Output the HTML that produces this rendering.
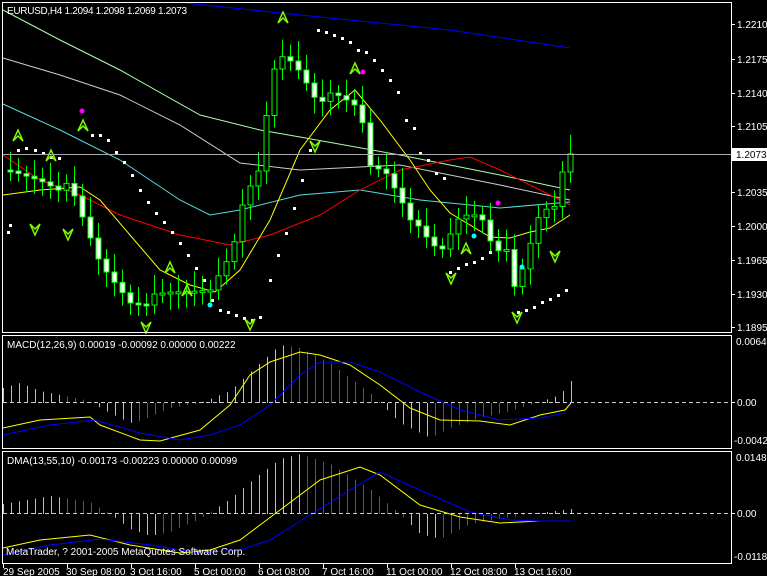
<!DOCTYPE html>
<html><head><meta charset="utf-8"><style>
html,body{margin:0;padding:0;background:#000;width:767px;height:576px;overflow:hidden}
svg{display:block}
text{font-family:"Liberation Sans",sans-serif;font-size:10px;fill:#fff}
</style></head><body>
<svg id="s" width="767" height="576" xmlns="http://www.w3.org/2000/svg">
<rect width="767" height="576" fill="#000"/>
<g id="g"></g>
<g fill="none" stroke="#fff" stroke-width="1">
<rect x="2.5" y="2.5" width="729" height="330"/>
<rect x="2.5" y="335.5" width="729" height="113"/>
<rect x="2.5" y="451.5" width="729" height="112"/>
</g>
<line x1="3" y1="154.5" x2="731" y2="154.5" stroke="#aaa"/>
<line x1="3" y1="402.5" x2="731" y2="402.5" stroke="#ccc" stroke-dasharray="4,3"/>
<line x1="3" y1="513.5" x2="731" y2="513.5" stroke="#ccc" stroke-dasharray="4,3"/>
<g stroke="#fff"><line x1="731" y1="24.5" x2="735" y2="24.5"/><line x1="731" y1="59.5" x2="735" y2="59.5"/><line x1="731" y1="93.5" x2="735" y2="93.5"/><line x1="731" y1="126.5" x2="735" y2="126.5"/><line x1="731" y1="192.5" x2="735" y2="192.5"/><line x1="731" y1="226.5" x2="735" y2="226.5"/><line x1="731" y1="260.5" x2="735" y2="260.5"/><line x1="731" y1="294.5" x2="735" y2="294.5"/><line x1="731" y1="327.5" x2="735" y2="327.5"/><line x1="731" y1="402.5" x2="735" y2="402.5"/><line x1="731" y1="513.5" x2="735" y2="513.5"/></g>
<text x="737" y="28">1.2210</text><text x="737" y="63">1.2175</text><text x="737" y="97">1.2140</text><text x="737" y="130">1.2105</text>
<text x="737" y="196">1.2035</text><text x="737" y="230">1.2000</text><text x="737" y="264">1.1965</text><text x="737" y="298">1.1930</text><text x="737" y="331">1.1895</text>
<rect x="732" y="148" width="35" height="13" fill="#fff"/><text x="736" y="158" style="fill:#000">1.2073</text>
<text x="736" y="345">0.00648</text><text x="737" y="406">0.00</text><text x="734" y="444">-0.00425</text>
<text x="736" y="461">0.01486</text><text x="737" y="517">0.00</text><text x="734" y="560">-0.01182</text>
<text x="7" y="14" textLength="180">EURUSD,H4  1.2094 1.2098 1.2069 1.2073</text>
<text x="7" y="348">MACD(12,26,9) 0.00019 -0.00092 0.00000 0.00222</text>
<text x="7" y="464">DMA(13,55,10) -0.00173 -0.00223 0.00000 0.00099</text>
<text x="6" y="555">MetaTrader, ? 2001-2005 MetaQuotes Software Corp.</text>
<g stroke="#fff"><line x1="3.5" y1="564" x2="3.5" y2="568"/><line x1="67.5" y1="564" x2="67.5" y2="568"/><line x1="131.5" y1="564" x2="131.5" y2="568"/><line x1="195.5" y1="564" x2="195.5" y2="568"/><line x1="259.5" y1="564" x2="259.5" y2="568"/><line x1="323.5" y1="564" x2="323.5" y2="568"/><line x1="387.5" y1="564" x2="387.5" y2="568"/><line x1="451.5" y1="564" x2="451.5" y2="568"/><line x1="515.5" y1="564" x2="515.5" y2="568"/></g>
<text x="3" y="575">29 Sep 2005</text><text x="66" y="575">30 Sep 08:00</text><text x="130" y="575">3 Oct 16:00</text><text x="194" y="575">5 Oct 00:00</text><text x="258" y="575">6 Oct 08:00</text><text x="322" y="575">7 Oct 16:00</text><text x="386" y="575">11 Oct 00:00</text><text x="450" y="575">12 Oct 08:00</text><text x="514" y="575">13 Oct 16:00</text>
</svg>
<script>
var g=document.getElementById('g'),NS='http://www.w3.org/2000/svg';
function el(t,a){var e=document.createElementNS(NS,t);for(var k in a)e.setAttribute(k,a[k]);g.appendChild(e);return e;}
function interp(pts,x){for(var i=0;i<pts.length-1;i++){if(x<=pts[i+1][0]){var a=pts[i],b=pts[i+1];return a[1]+(b[1]-a[1])*(x-a[0])/(b[0]-a[0]);}}return pts[pts.length-1][1];}
function line(pts,c){el('polyline',{points:pts.map(function(p){return p.join(',')}).join(' '),fill:'none',stroke:c,'stroke-width':1});}
line([[185,3],[300,15],[450,30],[570,48]],'#00f');
line([[3,10],[60,40],[120,70],[200,115],[260,130],[300,137],[400,155],[500,175],[570,190]],'#aaffaa');
line([[3,58],[60,75],[120,95],[180,125],[240,163],[300,170],[400,165],[500,185],[570,200]],'#ccc');
line([[3,104],[60,130],[120,160],[180,200],[210,215],[240,210],[300,195],[360,190],[420,200],[500,208],[570,202]],'#55dddd');
line([[3,155],[40,180],[80,195],[120,215],[180,235],[230,245],[270,235],[320,215],[360,190],[400,170],[450,160],[470,157],[500,170],[540,190],[570,205]],'#f00');
line([[3,195],[40,190],[80,187],[100,200],[130,235],[160,270],[190,285],[215,292],[240,270],[270,220],[300,150],[330,110],[355,90],[380,120],[410,160],[430,190],[450,213],[470,225],[490,237],[510,238],[530,232],[550,228],[570,215]],'#ff0');
var cp=[[10,172],[40,178],[70,190],[100,265],[130,300],[150,300],[170,295],[190,292],[210,288],[230,250],[245,200],[260,170],[268,100],[276,60],[285,55],[300,70],[315,95],[340,100],[360,110],[368,165],[385,170],[400,195],[420,235],[440,255],[460,215],[480,212],[492,242],[505,250],[515,295],[525,262],[540,212],[555,205],[565,155],[571,150]];
var prev=170;
for(var x=10;x<=571;x+=8){var c=interp(cp,x)+((x*7)%11-5);var o=prev;var t=Math.min(o,c),b=Math.max(o,c);if(b-t<2)b=t+2;
el('line',{x1:x+0.5,y1:t-8-(x%13),x2:x+0.5,y2:b+8+(x%9),stroke:'#0f0'});
el('rect',{x:x-2,y:t,width:5,height:b-t,fill:c>o?'#fff':'#000',stroke:'#0f0','stroke-width':1});prev=c;}
var sar=[[8,232],[10,225],[18,150],[26,148],[35,150],[43,153],[51,157],[59,158],[92,135],[100,135],[108,140],[116,152],[124,162],[132,175],[140,190],[148,202],[156,213],[164,222],[172,232],[180,243],[188,255],[196,268],[204,280],[212,300],[220,310],[228,312],[236,315],[244,318],[252,320],[260,317],[270,280],[278,255],[286,233],[294,208],[302,180],[310,150],[318,30],[326,32],[334,35],[342,38],[350,42],[358,50],[366,52],[374,60],[382,70],[390,80],[398,92],[406,120],[414,128],[420,153],[428,160],[436,173],[444,178],[450,272],[458,268],[466,264],[474,262],[482,258],[490,252],[498,248],[518,312],[526,310],[534,307],[542,302],[550,299],[558,295],[566,290]];
sar.forEach(function(p){el('rect',{x:p[0]-1,y:p[1]-1,width:3,height:3,fill:'#fff'})});
function up(x,y){el('path',{d:'M'+(x-5)+' '+(y+6)+' L'+x+' '+(y-5)+' L'+(x+5)+' '+(y+6)+' L'+x+' '+(y+1)+' Z',fill:'none',stroke:'#7fff00','stroke-width':1.5});}
function dn(x,y){el('path',{d:'M'+(x-5)+' '+(y-6)+' L'+x+' '+(y+5)+' L'+(x+5)+' '+(y-6)+' L'+x+' '+(y-1)+' Z',fill:'none',stroke:'#7fff00','stroke-width':1.5});}
[[18,135],[51,155],[83,125],[170,267],[187,290],[283,17],[355,68],[466,248]].forEach(function(p){up(p[0],p[1])});
[[35,230],[68,235],[146,328],[315,147],[451,279],[517,318],[555,257],[250,325]].forEach(function(p){dn(p[0],p[1])});
[[82,111,'#f0f'],[363,72,'#f0f'],[498,203,'#f0f'],[210,305,'#0ff'],[474,236,'#0ff'],[522,267,'#0ff']].forEach(function(p){el('circle',{cx:p[0],cy:p[1],r:2.5,fill:p[2]})});
function hist(z,pts){for(var x=3;x<=571;x+=8){var v=interp(pts,x);var pv=interp(pts,x-8);var col=(Math.abs(v)<Math.abs(pv))?'#e02020':'#8fd0f0';if(x<60)col='#8fd0f0';el('line',{x1:x+0.5,y1:z,x2:x+0.5,y2:z-v,stroke:col});}}
hist(403,[[3,15],[20,20],[40,12],[90,2],[100,-5],[130,-20],[140,-18],[170,-5],[200,0],[230,12],[260,40],[280,58],[300,55],[330,40],[370,10],[400,-20],[430,-35],[450,-25],[480,-15],[510,-8],[530,-2],[560,8],[571,22]]);
hist(514,[[3,10],[50,18],[90,12],[110,0],[130,-15],[150,-22],[170,-18],[200,-5],[230,15],[260,40],[280,55],[300,60],[330,50],[370,25],[400,0],[420,-20],[440,-25],[470,-10],[500,-5],[530,0],[571,5]]);
line([[3,428],[40,420],[90,417],[100,425],[140,440],[160,441],[200,430],[230,405],[250,375],[270,362],[300,352],[320,355],[350,365],[380,385],[410,408],[440,420],[480,421],[510,425],[540,415],[565,410],[571,403]],'#ff0');
line([[3,435],[50,425],[95,420],[140,433],[180,440],[210,435],[240,425],[270,405],[300,375],[320,362],[350,362],[380,372],[420,392],[460,410],[500,420],[540,418],[565,413]],'#00f');
line([[3,548],[40,540],[90,535],[130,545],[180,553],[210,550],[240,540],[280,510],[320,480],[360,467],[380,475],[420,505],[460,517],[500,523],[540,521],[571,521]],'#ff0');
line([[3,555],[50,545],[100,539],[150,545],[200,553],[240,550],[270,540],[310,515],[350,490],[380,472],[420,490],[470,512],[510,520],[540,521],[571,521]],'#00f');
</script>
</body></html>
